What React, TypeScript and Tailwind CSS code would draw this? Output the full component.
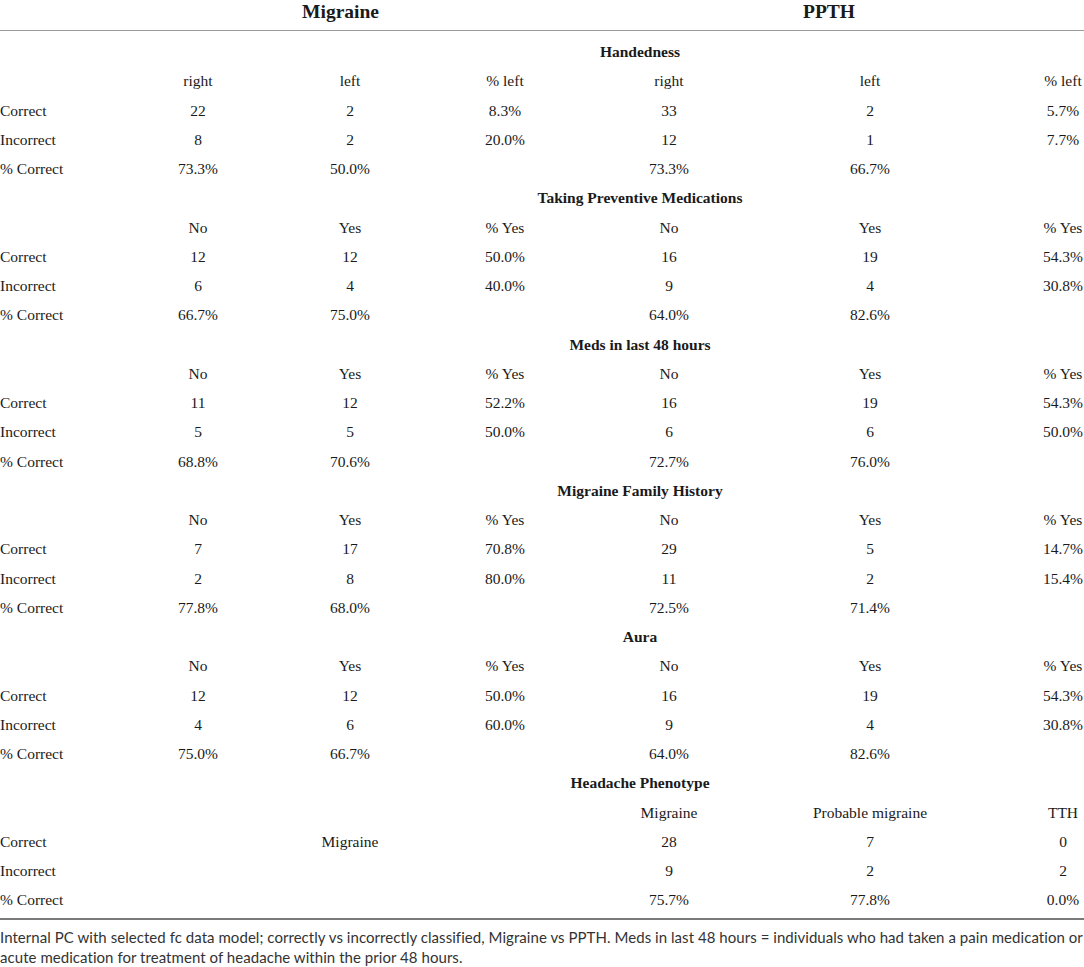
const sections = [
  {
    title: "Handedness",
    head: ["right", "left", "% left", "right", "left", "% left"],
    rows: [
      ["Correct", "22", "2", "8.3%", "33", "2", "5.7%"],
      ["Incorrect", "8", "2", "20.0%", "12", "1", "7.7%"],
      ["% Correct", "73.3%", "50.0%", "", "73.3%", "66.7%", ""],
    ],
  },
  {
    title: "Taking Preventive Medications",
    head: ["No", "Yes", "% Yes", "No", "Yes", "% Yes"],
    rows: [
      ["Correct", "12", "12", "50.0%", "16", "19", "54.3%"],
      ["Incorrect", "6", "4", "40.0%", "9", "4", "30.8%"],
      ["% Correct", "66.7%", "75.0%", "", "64.0%", "82.6%", ""],
    ],
  },
  {
    title: "Meds in last 48 hours",
    head: ["No", "Yes", "% Yes", "No", "Yes", "% Yes"],
    rows: [
      ["Correct", "11", "12", "52.2%", "16", "19", "54.3%"],
      ["Incorrect", "5", "5", "50.0%", "6", "6", "50.0%"],
      ["% Correct", "68.8%", "70.6%", "", "72.7%", "76.0%", ""],
    ],
  },
  {
    title: "Migraine Family History",
    head: ["No", "Yes", "% Yes", "No", "Yes", "% Yes"],
    rows: [
      ["Correct", "7", "17", "70.8%", "29", "5", "14.7%"],
      ["Incorrect", "2", "8", "80.0%", "11", "2", "15.4%"],
      ["% Correct", "77.8%", "68.0%", "", "72.5%", "71.4%", ""],
    ],
  },
  {
    title: "Aura",
    head: ["No", "Yes", "% Yes", "No", "Yes", "% Yes"],
    rows: [
      ["Correct", "12", "12", "50.0%", "16", "19", "54.3%"],
      ["Incorrect", "4", "6", "60.0%", "9", "4", "30.8%"],
      ["% Correct", "75.0%", "66.7%", "", "64.0%", "82.6%", ""],
    ],
  },
  {
    title: "Headache Phenotype",
    head: ["", "", "", "Migraine", "Probable migraine", "TTH"],
    rows: [
      ["Correct", "", "Migraine", "", "28", "7", "0"],
      ["Incorrect", "", "", "", "9", "2", "2"],
      ["% Correct", "", "", "", "75.7%", "77.8%", "0.0%"],
    ],
  },
];

const grid = "grid grid-cols-[120px_156px_148px_162px_166px_236px_96px] h-[29.25px] items-center";

function Cells({ cells }: { cells: string[] }) {
  return (
    <>
      {cells.map((c, i) => (
        <div
          key={i}
          className={
            i === 0
              ? "whitespace-nowrap"
              : i === 6
              ? "flex justify-center pl-[54px] whitespace-nowrap"
              : "flex justify-center whitespace-nowrap"
          }
        >
          {c}
        </div>
      ))}
    </>
  );
}

export default function App() {
  return (
    <div className="w-[1084px] h-[967px] overflow-hidden bg-white text-[#1a1a1a]">
      <div className="font-['Liberation_Serif',serif] text-[15.5px]">
        {/* group headers */}
        <div className="h-[31px] flex items-start border-b border-[#9a9a9a] text-[19.5px] font-bold">
          <div className="w-[342px] flex justify-end leading-[24px]">
            <span className="translate-x-[37px]">Migraine</span>
          </div>
          <div className="flex-1 flex justify-center pl-[232px] leading-[24px]">PPTH</div>
        </div>

        <div className="pt-[6px] pb-[3px] border-b-2 border-[#7a7a7a]">
          {sections.map((s) => (
            <div key={s.title}>
              <div className="h-[29.25px] flex items-center justify-center pl-[196px] font-bold">
                {s.title}
              </div>
              <div className={grid}>
                <Cells cells={["", ...s.head]} />
              </div>
              {s.rows.map((r) => (
                <div key={r[0]} className={grid}>
                  <Cells cells={r} />
                </div>
              ))}
            </div>
          ))}
        </div>
      </div>

      <p className="font-['Lato',sans-serif] text-[15px] tracking-[0.05px] leading-[20px] text-[#333] pt-[7px]">
        Internal PC with selected fc data model; correctly vs incorrectly classified, Migraine vs PPTH. Meds in last 48 hours = individuals who had taken a pain medication or acute medication for treatment of headache within the prior 48 hours.
      </p>
    </div>
  );
}
